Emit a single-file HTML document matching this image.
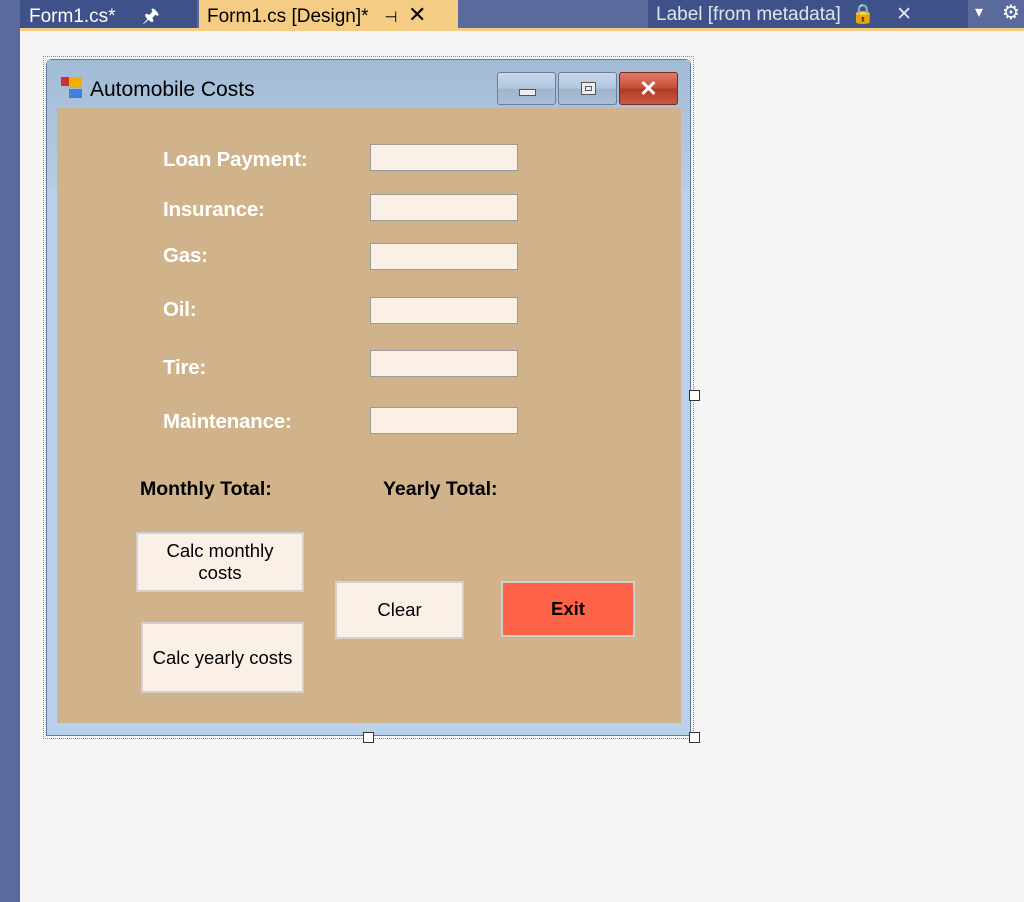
<!DOCTYPE html>
<html><head><meta charset="utf-8"><style>
*{margin:0;padding:0;box-sizing:border-box}
body{width:1024px;height:902px;background:#f5f5f5;position:relative;overflow:hidden;font-family:"Liberation Sans",sans-serif}
.a{position:absolute}
.lbl{position:absolute;color:#fff;font-size:20.5px;font-weight:bold;letter-spacing:-0.2px}
.tb{position:absolute;left:370px;width:148px;height:27px;background:#faf0e6;border:1px solid #9a9a9a}
.btn{position:absolute;background:#faf0e6;border:2px solid #d0d0d0;display:flex;align-items:center;justify-content:center;text-align:center;font-size:18.5px;color:#000;line-height:22px}
.h{position:absolute;width:11px;height:11px;background:#fff;border:1px solid #333}
.tbtn{position:absolute;top:72px;width:59px;height:33px;border:1px solid #6a7d9a;border-radius:3px;background:linear-gradient(#c9d8ea,#b3c7de 50%,#9fb5cf 51%,#a9bfd8)}
</style></head><body>
<div class="a" style="left:0;top:0;width:1024px;height:28px;background:#5a6a9c"></div>
<div class="a" style="left:0;top:0;width:20px;height:902px;background:#5a6a9c"></div>
<div class="a" style="left:20px;top:28px;width:1004px;height:3px;background:#f5cc84"></div>
<div class="a" style="left:20px;top:0;width:177px;height:28px;background:#3e5189;color:#fff;font-size:19px;padding:2px 0 0 9px">Form1.cs*&nbsp;&nbsp;&nbsp;&nbsp;&nbsp;🖈</div>
<div class="a" style="left:199px;top:0;width:259px;height:31px;background:#f5cc84;color:#000;font-size:19px;padding:2px 0 0 8px">Form1.cs [Design]*&nbsp;&nbsp;&nbsp;<span style="font-size:15px">⊣</span>&nbsp;&nbsp;<span style="font-size:22px">✕</span></div>
<div class="a" style="left:648px;top:0;width:320px;height:28px;background:#3e5189;color:#dfe4f0;font-size:19px;padding:2px 0 0 8px">Label [from metadata]&nbsp;&nbsp;🔒&nbsp;&nbsp;&nbsp;&nbsp;✕</div>
<div class="a" style="left:975px;top:2px;color:#fff;font-size:16px">▾</div>
<div class="a" style="left:1002px;top:0px;color:#fff;font-size:20px">⚙</div>

<div class="a" style="left:43px;top:56px;width:651px;height:683px;border:1px dotted #888"></div>
<div class="a" style="left:46px;top:59px;width:645px;height:677px;background:#b9d1ea;border:1px solid #5a7aa0;border-radius:6px 6px 0 0"></div>
<div class="a" style="left:47px;top:60px;width:643px;height:128px;background:linear-gradient(#a2bbd6,#b7cde4)"></div>
<div class="a" style="left:61px;top:77px;width:9px;height:9px;background:#d03030"></div>
<div class="a" style="left:69px;top:77px;width:13px;height:11px;background:#f0b000"></div>
<div class="a" style="left:69px;top:89px;width:13px;height:9px;background:#4080e0"></div>
<div class="a" style="left:90px;top:78px;font-size:21px;color:#000">Automobile Costs</div>
<div class="tbtn" style="left:497px"><div class="a" style="left:21px;top:16px;width:17px;height:7px;background:#eee;border:1px solid #555"></div></div>
<div class="tbtn" style="left:558px"><div class="a" style="left:22px;top:9px;width:15px;height:13px;background:#eee;border:1px solid #555"><div style="margin:3px;width:7px;height:5px;border:1px solid #556"></div></div></div>
<div class="tbtn" style="left:619px;background:linear-gradient(#e07a66,#c44c36 50%,#b03a24 51%,#c85a44);border-color:#7a2a1a;color:#fff;font-size:22px;font-weight:bold;text-align:center;line-height:31px">✕</div>

<div class="a" style="left:57px;top:108px;width:624px;height:615px;background:#d0b38b"></div>

<div class="lbl" style="left:163px;top:148px">Loan Payment:</div>
<div class="lbl" style="left:163px;top:198px">Insurance:</div>
<div class="lbl" style="left:163px;top:244px">Gas:</div>
<div class="lbl" style="left:163px;top:298px">Oil:</div>
<div class="lbl" style="left:163px;top:356px">Tire:</div>
<div class="lbl" style="left:163px;top:410px">Maintenance:</div>
<div class="tb" style="top:144px"></div>
<div class="tb" style="top:194px"></div>
<div class="tb" style="top:243px"></div>
<div class="tb" style="top:297px"></div>
<div class="tb" style="top:350px"></div>
<div class="tb" style="top:407px"></div>
<div class="a" style="left:140px;top:478px;font-size:19.5px;font-weight:bold">Monthly Total:</div>
<div class="a" style="left:383px;top:478px;font-size:19.5px;font-weight:bold">Yearly Total:</div>

<div class="btn" style="left:136px;top:532px;width:168px;height:60px">Calc monthly<br>costs</div>
<div class="btn" style="left:141px;top:622px;width:163px;height:71px">Calc yearly costs</div>
<div class="btn" style="left:335px;top:581px;width:129px;height:58px">Clear</div>
<div class="btn" style="left:501px;top:581px;width:134px;height:56px;background:#ff6347;font-weight:bold">Exit</div>

<div class="h" style="left:689px;top:390px"></div>
<div class="h" style="left:363px;top:732px"></div>
<div class="h" style="left:689px;top:732px"></div>
</body></html>
